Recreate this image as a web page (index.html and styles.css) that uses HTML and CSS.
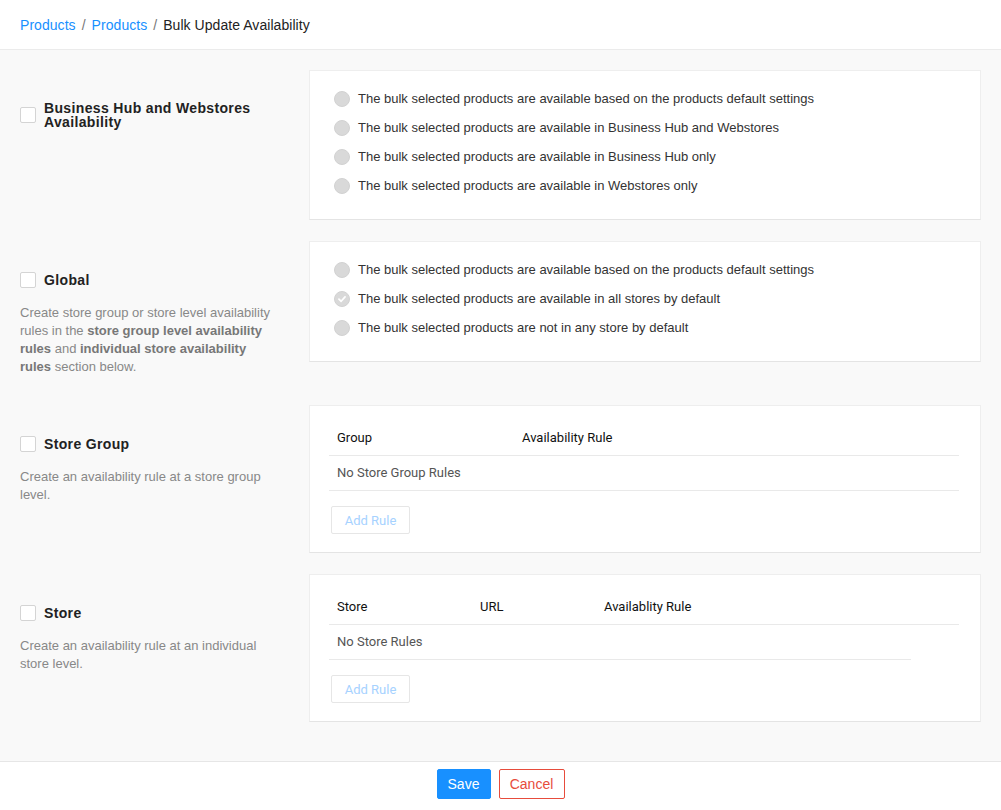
FILE: index.html
```html
<!DOCTYPE html>
<html lang="en">
  <head>
    <meta charset="UTF-8" />
    <meta name="viewport" content="width=device-width, initial-scale=1" />
    <title>Bulk Update Availability</title>
    <link rel="stylesheet" href="styles.css">
  </head>
  <body>
    <header class="topbar">
      <nav class="breadcrumb" aria-label="Breadcrumb">
        <a href="#">Products</a>
        <span class="sep">/</span>
        <a href="#">Products</a>
        <span class="sep">/</span>
        <span class="current">Bulk Update Availability</span>
      </nav>
    </header>

    <main class="content">
      <!-- Business hub / webstores -->
      <section class="section">
        <div class="section-info">
          <label class="title-row">
            <input type="checkbox" />
            <span class="box" aria-hidden="true"></span>
            <span class="title">Business Hub and Webstores Availability</span>
          </label>
        </div>
        <div class="card card-radios">
          <label class="radio"><input type="radio" name="hub" /><span class="dot"></span>The bulk selected products are available based on the products default settings</label>
          <label class="radio"><input type="radio" name="hub" /><span class="dot"></span>The bulk selected products are available in Business Hub and Webstores</label>
          <label class="radio"><input type="radio" name="hub" /><span class="dot"></span>The bulk selected products are available in Business Hub only</label>
          <label class="radio"><input type="radio" name="hub" /><span class="dot"></span>The bulk selected products are available in Webstores only</label>
        </div>
      </section>

      <!-- Global -->
      <section class="section">
        <div class="section-info">
          <label class="title-row">
            <input type="checkbox" />
            <span class="box" aria-hidden="true"></span>
            <span class="title">Global</span>
          </label>
          <p class="desc">
            Create store group or store level availability rules in the
            <strong>store group level availability rules</strong> and
            <strong>individual store availability rules</strong> section below.
          </p>
        </div>
        <div class="card card-radios">
          <label class="radio"><input type="radio" name="global" /><span class="dot"></span>The bulk selected products are available based on the products default settings</label>
          <label class="radio"><input type="radio" name="global" checked /><span class="dot">
            <svg viewBox="0 0 16 16" aria-hidden="true"><polyline points="4.5 8.2 7 10.6 11.5 5.6"></polyline></svg>
          </span>The bulk selected products are available in all stores by default</label>
          <label class="radio"><input type="radio" name="global" /><span class="dot"></span>The bulk selected products are not in any store by default</label>
        </div>
      </section>

      <!-- Store group -->
      <section class="section">
        <div class="section-info">
          <label class="title-row">
            <input type="checkbox" />
            <span class="box" aria-hidden="true"></span>
            <span class="title">Store Group</span>
          </label>
          <p class="desc">Create an availability rule at a store group level.</p>
        </div>
        <div class="card card-table">
          <table class="rules">
            <colgroup>
              <col class="col-group" />
              <col />
            </colgroup>
            <thead>
              <tr><th>Group</th><th>Availability Rule</th></tr>
            </thead>
            <tbody>
              <tr><td colspan="2" class="empty">No Store Group Rules</td></tr>
            </tbody>
          </table>
          <button type="button" class="btn-add" disabled>Add Rule</button>
        </div>
      </section>

      <!-- Store -->
      <section class="section">
        <div class="section-info">
          <label class="title-row">
            <input type="checkbox" />
            <span class="box" aria-hidden="true"></span>
            <span class="title">Store</span>
          </label>
          <p class="desc">Create an availability rule at an individual store level.</p>
        </div>
        <div class="card card-table">
          <table class="rules">
            <colgroup>
              <col class="col-store" />
              <col class="col-url" />
              <col />
              <col class="col-actions" />
            </colgroup>
            <thead>
              <tr><th>Store</th><th>URL</th><th>Availablity Rule</th><th></th></tr>
            </thead>
            <tbody>
              <tr><td colspan="3" class="empty">No Store Rules</td><td class="blank"></td></tr>
            </tbody>
          </table>
          <button type="button" class="btn-add" disabled>Add Rule</button>
        </div>
      </section>
    </main>

    <footer class="actions">
      <button type="button" class="btn btn-save">Save</button>
      <button type="button" class="btn btn-cancel">Cancel</button>
    </footer>
  </body>
</html>
```

FILE: styles.css
```css
:root {
  --clr-primary: #1890ff;
  --clr-danger: #e74c3c;
  --clr-bg: #f9f9f9;
  --clr-line: #e9e9e9;
  --clr-text: #333;
  --clr-muted: #888;
  --font-family: "Liberation Sans", Arial, sans-serif;
  --font-table: Roboto, "Liberation Sans", sans-serif;
}

* {
  box-sizing: border-box;
}

html,
body {
  height: 100%;
}

body {
  margin: 0;
  display: flex;
  flex-direction: column;
  min-height: 100vh;
  background: var(--clr-bg);
  font-family: var(--font-family);
  font-size: 13px;
  color: var(--clr-text);
}

/* Top breadcrumb bar */
.topbar {
  height: 50px;
  background: #fff;
  border-bottom: 1px solid #ebebeb;
  display: flex;
  align-items: center;
  padding: 0 20px;
}

.breadcrumb {
  font-size: 14px;
  display: flex;
  align-items: center;
  letter-spacing: 0.05px;
}

.breadcrumb a {
  color: var(--clr-primary);
  text-decoration: none;
}

.breadcrumb .sep {
  color: #777;
  margin: 0 6px;
}

.breadcrumb .current {
  color: #222;
}

/* Main content */
.content {
  flex: 1;
  padding: 20px 20px 0 20px;
}

.section {
  display: grid;
  grid-template-columns: 270px 1fr;
  align-items: start;
  column-gap: 19px;
  margin-bottom: 21px;
}

.section-info {
  padding: 31px 0 8px;
}

.title-row {
  display: flex;
  align-items: center;
  gap: 8px;
  cursor: pointer;
}

.title-row input,
.radio input {
  position: absolute;
  opacity: 0;
  pointer-events: none;
}

.box {
  flex: none;
  width: 16px;
  height: 16px;
  background: #fff;
  border: 1px solid #d4d4d4;
  border-radius: 2px;
}

.title {
  font-size: 14px;
  font-weight: 700;
  line-height: 14px;
  color: #222;
  letter-spacing: 0.35px;
}

.desc {
  max-width: 255px;
  margin: 16px 0 0;
  line-height: 18px;
  color: var(--clr-muted);
}

.desc strong {
  color: #777;
}

/* Cards */
.card {
  background: #fff;
  border: 1px solid #eee;
  border-bottom-color: #e4e4e4;
}

.card-radios {
  padding: 13px 24px 19px;
}

.radio {
  display: flex;
  align-items: center;
  gap: 8px;
  height: 29px;
  cursor: pointer;
}

.dot {
  flex: none;
  width: 16px;
  height: 16px;
  border-radius: 50%;
  background: #d9d9d9;
  border: 1px solid #d2d2d2;
  display: flex;
  align-items: center;
  justify-content: center;
}

.dot svg {
  width: 16px;
  height: 16px;
  fill: none;
  stroke: #fff;
  stroke-width: 2;
  stroke-linecap: round;
  stroke-linejoin: round;
}

/* Rule tables */
.card-table {
  padding: 15px 21px 18px 19px;
}

.rules {
  width: 100%;
  border-collapse: collapse;
  table-layout: fixed;
  font-family: var(--font-table);
  font-size: 13px;
}

.col-group {
  width: 185px;
}

.col-store {
  width: 143px;
}

.col-url {
  width: 124px;
}

.col-actions {
  width: 48px;
}

.rules th,
.rules td {
  text-align: left;
  padding: 9px 8px;
  line-height: 16px;
  border-bottom: 1px solid var(--clr-line);
}

.rules th {
  font-weight: 400;
  color: #111;
}

.rules td.empty {
  color: #555;
}

.rules td.blank {
  border-bottom: none;
}

.btn-add {
  display: block;
  margin: 15px 0 0 2px;
  height: 28px;
  padding: 0 12px;
  width: 79px;
  background: #fff;
  border: 1px solid #e6e6e6;
  border-radius: 2px;
  font-family: var(--font-table);
  font-size: 13px;
  color: #a6d2ff;
  cursor: not-allowed;
}

/* Footer actions */
.actions {
  height: 49px;
  background: #fff;
  border-top: 1px solid #e6e6e6;
  display: flex;
  justify-content: center;
  align-items: flex-start;
  gap: 8px;
  padding-top: 7px;
}

.btn {
  height: 30px;
  border-radius: 2px;
  font-family: var(--font-family);
  font-size: 14px;
  cursor: pointer;
}

.btn-save {
  width: 54px;
  background: var(--clr-primary);
  border: 1px solid var(--clr-primary);
  color: #fff;
}

.btn-cancel {
  width: 66px;
  background: #fff;
  border: 1px solid var(--clr-danger);
  color: var(--clr-danger);
}
```
